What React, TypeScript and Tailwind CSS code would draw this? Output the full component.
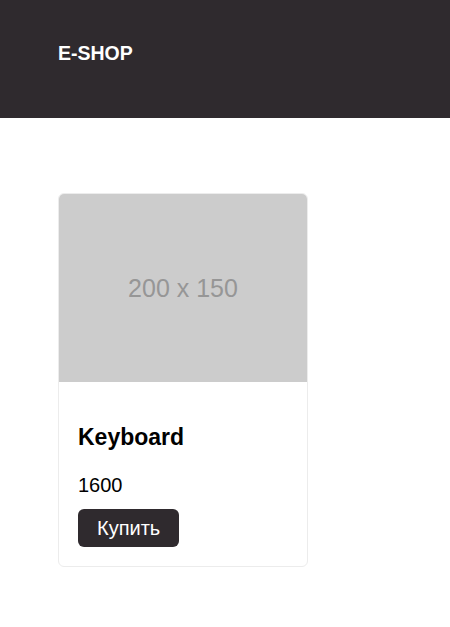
import React from "react";

type Product = {
  title: string;
  price: number;
};

const products: Product[] = [{title: "Keyboard", price: 1600}];

const Header: React.FunctionComponent = () => {
  return (
    <header className="h-[118px] bg-[#2f2a2e] flex items-center px-[58px] pb-[10px]">
      <a href="#" className="text-white text-[19.5px] font-bold leading-none">E-SHOP</a>
    </header>
  );
};

const ProductCard: React.FunctionComponent<{product: Product}> = ({product}) => {
  return (
    <div className="w-[250px] rounded-[6px] border border-[#ececec] overflow-hidden bg-white">
      <div className="h-[188px] bg-[#cccccc] flex items-center justify-center">
        <span className="text-[#969696] text-[25px] leading-none">200 x 150</span>
      </div>
      <div className="px-[19px] pt-[42px] pb-[19px]">
        <h5 className="text-[23px] font-bold leading-[26px] text-black">{product.title}</h5>
        <p className="mt-[21px] text-[20px] leading-[28px] text-black">{product.price}</p>
        <button type="button" className="mt-[10px] h-[38px] px-[19px] rounded-[6px] bg-[#2f2a2e] text-white text-[20px] leading-none">
          Купить
        </button>
      </div>
    </div>
  );
};

export default function App() {
  return (
    <div className="min-h-[627px] bg-white font-['Liberation_Sans',Arial,sans-serif]">
      <Header />
      <main className="px-[58px] pt-[75px] pb-10 flex flex-wrap gap-6">
        {products.map((p) => (
          <ProductCard key={p.title} product={p} />
        ))}
      </main>
    </div>
  );
}
